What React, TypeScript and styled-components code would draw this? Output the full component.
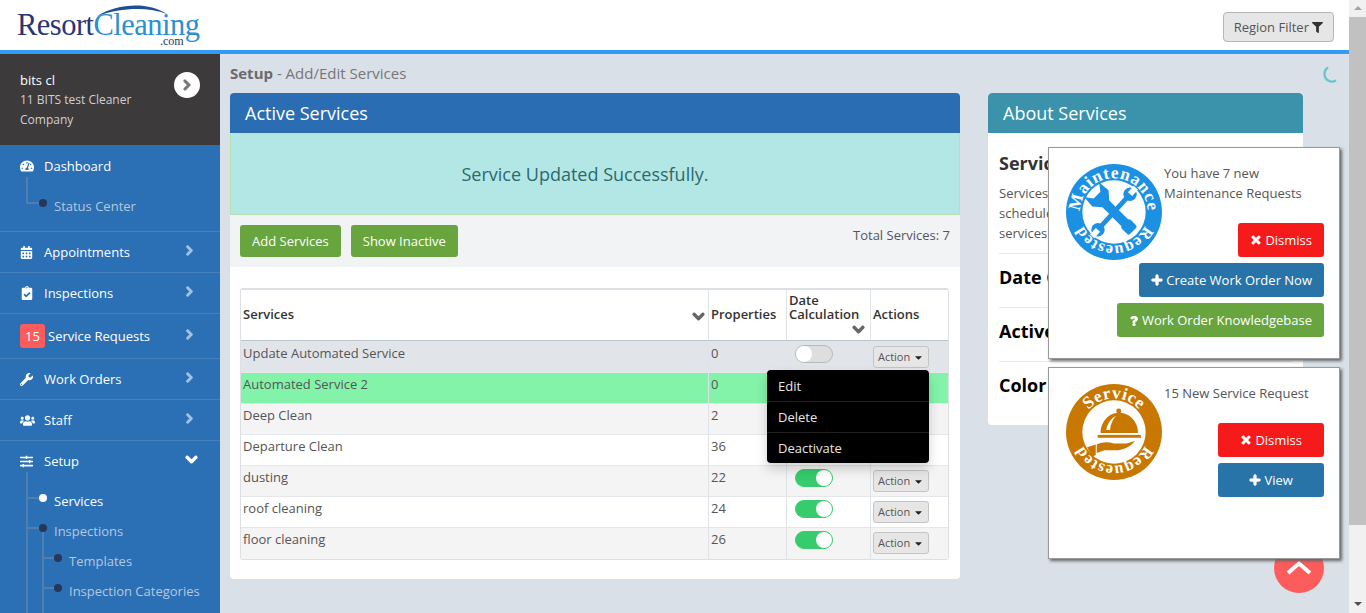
import React from "react";
import styled, { createGlobalStyle } from "styled-components";
import {
  FaCalendarAlt,
  FaCaretDown,
  FaChevronDown,
  FaChevronRight,
  FaClipboardCheck,
  FaFilter,
  FaPlus,
  FaQuestion,
  FaSlidersH,
  FaTachometerAlt,
  FaTimes,
  FaUsers,
  FaWrench,
} from "react-icons/fa";

const services = [
  { name: "Update Automated Service", count: 0, on: false, tone: "#e1e5ea" },
  { name: "Automated Service 2", count: 0, on: true, tone: "#84f3aa" },
  { name: "Deep Clean", count: 2, on: true, tone: "#f4f4f4" },
  { name: "Departure Clean", count: 36, on: true, tone: "#ffffff" },
  { name: "dusting", count: 22, on: true, tone: "#f4f4f4" },
  { name: "roof cleaning", count: 24, on: true, tone: "#ffffff" },
  { name: "floor cleaning", count: 26, on: true, tone: "#f4f4f4" },
];

const Logo = () => (
  <LogoSvg viewBox="0 0 190 50" width="190" height="50">
    <path d="M83 16 C103 4 133 1 153 14 C133 6 106 8 83 16Z" fill="#1f4f8f" />
    <text x="3" y="35" fontFamily="Liberation Serif, serif" fontSize="30.5" textLength="183" fill="#2b3576">
      Resort<tspan fill="#2b8fd2">Cleaning</tspan>
    </text>
    <text x="146" y="45" fontFamily="Liberation Serif, serif" fontSize="12" fill="#2b3576">
      .com
    </text>
  </LogoSvg>
);

const Spanner = ({ rotate, color }: { rotate: number; color: string }) => (
  <g transform={`rotate(${rotate} 50 50)`}>
    <rect x="47.5" y="28" width="5" height="44" fill={color} />
    <circle cx="50" cy="25" r="7" fill={color} />
    <circle cx="50" cy="75" r="7" fill={color} />
    <path d="M47 16h6v9h-6z" fill="#fff" />
    <path d="M47 84h6v-9h-6z" fill="#fff" />
  </g>
);

const MaintenanceBadge = () => (
  <BadgeSvg viewBox="0 0 100 100" width="96" height="96">
    <circle cx="50" cy="50" r="50" fill="#1c91e3" />
    <circle cx="50" cy="50" r="33" fill="#fff" />
    <defs>
      <path id="mTop" d="M17 61.5 A35 35 0 1 1 83 61.5" />
      <path id="mBot" d="M85 50 A35 35 0 0 1 15 50" />
    </defs>
    <Spanner rotate={42} color="#1c91e3" />
    <g transform="rotate(-45 50 50)">
      <rect x="45" y="30" width="10" height="40" fill="#1c91e3" />
      <path d="M39 17 L45 25 L55 25 L61 17 L62 30 L55 38 L45 38 L38 30Z" fill="#1c91e3" />
      <rect x="43.5" y="66" width="13" height="12" rx="2" fill="#1c91e3" />
    </g>
    <text fontFamily="Liberation Serif, serif" fontWeight="700" fontSize="18" fill="#fff" textAnchor="middle" letterSpacing=".8">
      <textPath href="#mTop" startOffset="50%">Maintenance</textPath>
    </text>
    <text fontFamily="Liberation Serif, serif" fontWeight="700" fontSize="17" fill="#fff" textAnchor="middle" letterSpacing=".6">
      <textPath href="#mBot" startOffset="50%">Requested</textPath>
    </text>
  </BadgeSvg>
);

const ServiceBadge = () => (
  <BadgeSvg viewBox="0 0 100 100" width="96" height="96">
    <circle cx="50" cy="50" r="50" fill="#c87800" />
    <circle cx="50" cy="50" r="33" fill="#fff" />
    <defs>
      <path id="sTop" d="M15 50 A35 35 0 0 1 85 50" />
      <path id="sBot" d="M85 50 A35 35 0 0 1 15 50" />
    </defs>
    <text fontFamily="Liberation Serif, serif" fontWeight="700" fontSize="18" fill="#fff" textAnchor="middle" letterSpacing=".6">
      <textPath href="#sTop" startOffset="50%">Service</textPath>
    </text>
    <text fontFamily="Liberation Serif, serif" fontWeight="700" fontSize="17" fill="#fff" textAnchor="middle" letterSpacing=".6">
      <textPath href="#sBot" startOffset="50%">Requested</textPath>
    </text>
    <circle cx="55" cy="28" r="2.6" fill="#c87800" />
    <path d="M36 51 C36 39 45 30 55 30 C66 30 75 39 75 51Z" fill="#c87800" />
    <path d="M42 48 C43 41 47 36 52 33 C48 38 46 43 46 48Z" fill="#fff" />
    <rect x="33" y="53" width="45" height="3" fill="#c87800" />
    <path d="M32 63 C38 60 44 60 50 62 L60 62 C64 62 66 61 72 59 C68 64 62 68 54 69 L40 69 L32 72Z" fill="#c87800" />
    <path d="M22 66 L31 63 L31 74 L27 76Z" fill="#c87800" />
  </BadgeSvg>
);

const App = () => {
  return (
    <Screen>
      <GlobalStyle />
      <Page>
        <Header>
          <Logo />
          <FilterButton>
            Region Filter <FaFilter size={11} />
          </FilterButton>
        </Header>
        <Body>
          <Sidebar>
            <UserBox>
              <UserText>
                <UserName>bits cl</UserName>
                <UserCompany>11 BITS test Cleaner Company</UserCompany>
              </UserText>
              <UserToggle>
                <FaChevronRight size={12} />
              </UserToggle>
            </UserBox>
            <NavGroup $height={87}>
              <NavHead>
                <NavIcon><FaTachometerAlt size={14} /></NavIcon>
                <NavLabel>Dashboard</NavLabel>
              </NavHead>
              <Tree $short>
                <TreeItem>Status Center</TreeItem>
              </Tree>
            </NavGroup>
            <NavRow>
              <NavIcon><FaCalendarAlt size={13} /></NavIcon>
              <NavLabel>Appointments</NavLabel>
              <NavArrow><FaChevronRight size={11} /></NavArrow>
            </NavRow>
            <NavRow>
              <NavIcon><FaClipboardCheck size={14} /></NavIcon>
              <NavLabel>Inspections</NavLabel>
              <NavArrow><FaChevronRight size={11} /></NavArrow>
            </NavRow>
            <NavRow $height={45}>
              <Count>15</Count>
              <NavLabel>Service Requests</NavLabel>
              <NavArrow><FaChevronRight size={11} /></NavArrow>
            </NavRow>
            <NavRow>
              <NavIcon><FaWrench size={13} /></NavIcon>
              <NavLabel>Work Orders</NavLabel>
              <NavArrow><FaChevronRight size={11} /></NavArrow>
            </NavRow>
            <NavRow>
              <NavIcon><FaUsers size={15} /></NavIcon>
              <NavLabel>Staff</NavLabel>
              <NavArrow><FaChevronRight size={11} /></NavArrow>
            </NavRow>
            <NavGroup $height={300}>
              <NavHead $height={40}>
                <NavIcon><FaSlidersH size={13} /></NavIcon>
                <NavLabel>Setup</NavLabel>
                <NavArrow $open><FaChevronDown size={13} /></NavArrow>
              </NavHead>
              <Tree>
                <TreeItem $active>Services</TreeItem>
                <TreeItem>Inspections</TreeItem>
                <SubTree>
                  <TreeItem>Templates</TreeItem>
                  <TreeItem>Inspection Categories</TreeItem>
                </SubTree>
              </Tree>
            </NavGroup>
          </Sidebar>
          <Main>
            <Crumb>
              <b>Setup</b> - Add/Edit Services
            </Crumb>
            <Columns>
              <ServicesPanel>
                <PanelHead $color="#2b6db3">Active Services</PanelHead>
                <Alert>Service Updated Successfully.</Alert>
                <Toolbar>
                  <GreenButton>Add Services</GreenButton>
                  <GreenButton>Show Inactive</GreenButton>
                  <Total>Total Services: 7</Total>
                </Toolbar>
                <TableWrap>
                  <Table>
                    <colgroup>
                      <col width="467" />
                      <col width="78" />
                      <col width="84" />
                      <col />
                    </colgroup>
                    <thead>
                      <tr>
                        <Th>
                          Services
                          <SideSort><FaChevronDown size={13} /></SideSort>
                        </Th>
                        <Th>Properties</Th>
                        <Th>
                          Date Calculation
                          <BlockSort><FaChevronDown size={13} /></BlockSort>
                        </Th>
                        <Th>Actions</Th>
                      </tr>
                    </thead>
                    <tbody>
                      {services.map((s, i) => (
                        <Row key={s.name} $tone={s.tone}>
                          <Td>{s.name}</Td>
                          <Td>{s.count}</Td>
                          <Td>
                            <Switch $on={s.on} />
                          </Td>
                          <ActionCell>
                            <ActionButton>
                              Action <FaCaretDown size={11} />
                            </ActionButton>
                            {i === 0 && (
                              <Menu>
                                <MenuItem>Edit</MenuItem>
                                <MenuItem>Delete</MenuItem>
                                <MenuItem>Deactivate</MenuItem>
                              </Menu>
                            )}
                          </ActionCell>
                        </Row>
                      ))}
                    </tbody>
                  </Table>
                </TableWrap>
              </ServicesPanel>
              <AboutPanel>
                <PanelHead $color="#3a93ab">About Services</PanelHead>
                <AboutBody>
                  <AboutIntro>
                    <AboutTitle $muted>Services</AboutTitle>
                    <AboutText>
                      Services
                      <br />
                      schedule
                      <br />
                      services
                    </AboutText>
                  </AboutIntro>
                  <AboutSection>
                    <AboutTitle>Date Calculation</AboutTitle>
                  </AboutSection>
                  <AboutSection>
                    <AboutTitle>Active</AboutTitle>
                  </AboutSection>
                  <AboutSection>
                    <AboutTitle>Color</AboutTitle>
                  </AboutSection>
                </AboutBody>
              </AboutPanel>
            </Columns>
          </Main>
        </Body>
      </Page>
      <Scrollbar>
        <ScrollArrow />
        <ScrollThumb />
        <ScrollArrow $down />
      </Scrollbar>
      <Spinner viewBox="0 0 18 18" width="18" height="18">
        <path d="M6 1.6 A7 7 0 1 0 14 14.5" fill="none" stroke="#68c5cf" strokeWidth="2.4" />
      </Spinner>
      <TopButton>
        <svg viewBox="0 0 26 14" width="26" height="14">
          <path d="M2 12 L13 2.5 L24 12" fill="none" stroke="#fff" strokeWidth="4" />
        </svg>
      </TopButton>
      <Popup $top={148} $height={210}>
        <MaintenanceBadge />
        <PopupContent>
          <PopupText>
            You have 7 new
            <br />
            Maintenance Requests
          </PopupText>
          <PopupButton $color="#f71a1a">
            <FaTimes size={12} /> Dismiss
          </PopupButton>
          <PopupButton $color="#2874a8">
            <FaPlus size={12} /> Create Work Order Now
          </PopupButton>
          <PopupButton $color="#68a53f">
            <FaQuestion size={10} /> Work Order Knowledgebase
          </PopupButton>
        </PopupContent>
      </Popup>
      <Popup $top={368} $height={190}>
        <ServiceBadge />
        <PopupContent>
          <PopupText>15 New Service Request</PopupText>
          <PopupButton $color="#f71a1a" $wide>
            <FaTimes size={12} /> Dismiss
          </PopupButton>
          <PopupButton $color="#2874a8" $wide>
            <FaPlus size={12} /> View
          </PopupButton>
        </PopupContent>
      </Popup>
    </Screen>
  );
};

export default App;

const GlobalStyle = createGlobalStyle`
  html, body {
    margin: 0;
    padding: 0;
    height: 613px;
    overflow: hidden;
  }
  * {
    box-sizing: border-box;
  }
`;
const Screen = styled.div`
  position: relative;
  width: 1366px;
  height: 613px;
  display: flex;
  overflow: hidden;
  background-color: #d9e0e8;
  font-family: "Open Sans", "Liberation Sans", sans-serif;
  font-size: 13px;
  color: #555;
`;
const Page = styled.div`
  flex: 1;
  min-width: 0;
  display: flex;
  flex-direction: column;
`;
const Header = styled.header`
  height: 54px;
  flex-shrink: 0;
  display: flex;
  align-items: flex-start;
  justify-content: space-between;
  padding: 0 15px 0 14px;
  background-color: #fff;
  border-bottom: 4px solid #339af5;
`;
const LogoSvg = styled.svg`
  display: block;
`;
const BadgeSvg = styled.svg`
  display: block;
  flex-shrink: 0;
  margin-top: 1px;
`;
const FilterButton = styled.button`
  margin-top: 12px;
  width: 111px;
  height: 30px;
  padding: 0;
  background-color: #e6e6e6;
  border: 1px solid #b5b5b5;
  border-radius: 4px;
  font-family: inherit;
  font-size: 13px;
  color: #555;
  svg {
    color: #333;
    vertical-align: -1px;
  }
`;
const Body = styled.div`
  flex: 1;
  min-height: 0;
  display: flex;
`;
const Sidebar = styled.nav`
  width: 220px;
  flex-shrink: 0;
  overflow: hidden;
  background-color: #2b6fb5;
`;
const UserBox = styled.div`
  height: 91px;
  display: flex;
  justify-content: space-between;
  padding: 16px 20px;
  background-color: #3c3a3b;
`;
const UserText = styled.div`
  width: 130px;
`;
const UserName = styled.div`
  color: #fff;
  line-height: 20px;
`;
const UserCompany = styled.div`
  font-size: 12px;
  line-height: 19.5px;
  color: #d0d0d0;
`;
const UserToggle = styled.div`
  width: 26px;
  height: 26px;
  margin-top: 2px;
  border-radius: 50%;
  display: flex;
  align-items: center;
  justify-content: center;
  background-color: #fff;
  color: #777;
  svg {
    stroke: currentColor;
    stroke-width: 50;
  }
`;
const NavGroup = styled.div<{ $height: number }>`
  height: ${(p) => p.$height}px;
  border-bottom: 1px solid #4a80ba;
`;
const NavHead = styled.div<{ $height?: number }>`
  height: ${(p) => p.$height ?? 41}px;
  display: flex;
  align-items: center;
  padding: 0 20px;
  color: #fff;
`;
const NavRow = styled(NavHead)`
  border-bottom: 1px solid #4a80ba;
`;
const NavIcon = styled.span`
  width: 24px;
  display: flex;
  align-items: center;
`;
const NavLabel = styled.span`
  flex: 1;
  font-weight: 500;
`;
const NavArrow = styled.span<{ $open?: boolean }>`
  display: flex;
  margin-right: ${(p) => (p.$open ? "2px" : "5px")};
  margin-top: -3px;
  color: ${(p) => (p.$open ? "#fff" : "#a5c3e2")};
  svg {
    stroke: currentColor;
    stroke-width: 50;
  }
`;
const Count = styled.span`
  width: 25px;
  height: 24px;
  margin-right: 3px;
  border-radius: 3px;
  display: flex;
  align-items: center;
  justify-content: center;
  background-color: #fd5c5c;
  color: #fff;
  font-size: 13px;
`;
const Tree = styled.div<{ $short?: boolean }>`
  position: relative;
  margin-top: 5px;
  padding-left: 27px;
  &::before {
    content: "";
    position: absolute;
    left: 26px;
    top: -14px;
    width: 2px;
    height: ${(p) => (p.$short ? "27px" : "400px")};
    background-color: #4f7fae;
  }
`;
const SubTree = styled.div`
  position: relative;
  padding-left: 15px;
  &::before {
    content: "";
    position: absolute;
    left: 15px;
    top: -14px;
    width: 2px;
    height: 300px;
    background-color: #4f7fae;
  }
`;
const TreeItem = styled.div<{ $active?: boolean }>`
  position: relative;
  height: 30px;
  line-height: 30px;
  padding-left: 27px;
  color: ${(p) => (p.$active ? "#fff" : "#b4c8de")};
  font-weight: ${(p) => (p.$active ? 500 : 400)};
  &::before {
    content: "";
    position: absolute;
    left: 0;
    top: 11px;
    width: 12px;
    height: 2px;
    background-color: #4f7fae;
  }
  &::after {
    content: "";
    position: absolute;
    left: 12px;
    top: 8px;
    width: 8px;
    height: 8px;
    border-radius: 50%;
    background-color: ${(p) => (p.$active ? "#fff" : "#26375a")};
  }
`;
const Main = styled.main`
  flex: 1;
  min-width: 0;
  padding: 0 0 0 10px;
`;
const Crumb = styled.div`
  height: 39px;
  line-height: 38px;
  font-size: 15px;
  color: #777;
  b {
    color: #6a6a6a;
  }
`;
const Columns = styled.div`
  display: flex;
  align-items: flex-start;
  gap: 28px;
`;
const ServicesPanel = styled.section`
  width: 730px;
  height: 486px;
  flex-shrink: 0;
  background-color: #fff;
  border-radius: 4px;
`;
const AboutPanel = styled.section`
  width: 315px;
  height: 332px;
  flex-shrink: 0;
  background-color: #fff;
  border-radius: 4px;
  overflow: hidden;
`;
const PanelHead = styled.h2<{ $color: string }>`
  margin: 0;
  height: 40px;
  padding: 0 15px;
  line-height: 41px;
  font-size: 18px;
  font-weight: 400;
  color: #fff;
  border-radius: 4px 4px 0 0;
  background-color: ${(p) => p.$color};
`;
const Alert = styled.div`
  height: 82px;
  display: flex;
  align-items: center;
  justify-content: center;
  padding-right: 20px;
  background-color: #b2e7e6;
  border: 1px solid #b8e2b4;
  border-top: none;
  font-size: 18px;
  color: #2d6a6a;
`;
const Toolbar = styled.div`
  height: 52px;
  display: flex;
  gap: 10px;
  padding: 10px;
  background-color: #f2f3f5;
`;
const GreenButton = styled.button`
  height: 32px;
  padding: 0 12px;
  border: none;
  border-radius: 3px;
  background-color: #68a53f;
  color: #fff;
  font-family: inherit;
  font-size: 13px;
  font-weight: 500;
`;
const Total = styled.div`
  margin-left: auto;
  line-height: 20px;
`;
const TableWrap = styled.div`
  padding: 21px 11px 0 10px;
`;
const Table = styled.table`
  width: 709px;
  border-collapse: separate;
  border-spacing: 0;
  table-layout: fixed;
  border: 1px solid #dcdfe3;
  border-top-width: 2px;
  border-radius: 3px;
`;
const Th = styled.th`
  position: relative;
  height: 51px;
  padding: 0 2px 2px;
  text-align: left;
  vertical-align: middle;
  font-size: 13px;
  font-weight: 600;
  line-height: 14px;
  color: #333;
  background-color: #fff;
  border-bottom: 1px solid #b8c4ce;
  & + & {
    border-left: 1px solid #dfe3e8;
  }
`;
const SideSort = styled.span`
  position: absolute;
  right: 3px;
  top: 20px;
  display: flex;
  color: #666;
  svg {
    stroke: currentColor;
    stroke-width: 50;
  }
`;
const BlockSort = styled.span`
  height: 15px;
  display: flex;
  align-items: flex-end;
  justify-content: flex-end;
  padding-right: 3px;
  color: #666;
  svg {
    stroke: currentColor;
    stroke-width: 50;
  }
`;
const Row = styled.tr<{ $tone: string }>`
  height: 31px;
  background-color: ${(p) => p.$tone};
`;
const Td = styled.td`
  position: relative;
  height: 31px;
  padding: 1px 2px 0;
  vertical-align: top;
  line-height: 20px;
  border-bottom: 1px solid #e4e7eb;
  tr:first-child & {
    height: 32px;
    padding-top: 2px;
  }
  tr:last-child & {
    border-bottom: none;
  }
  & + & {
    border-left: 1px solid #dfe3e8;
  }
`;
const ActionCell = styled(Td)`
  padding: 4px 2px 0;
  tr:first-child & {
    padding-top: 5px;
  }
`;
const Switch = styled.span<{ $on: boolean }>`
  position: relative;
  display: block;
  width: 38px;
  height: 18px;
  margin: 2px 0 0 6px;
  border-radius: 9px;
  border: 1px solid ${(p) => (p.$on ? "#3acb6e" : "#b8b8b8")};
  background-color: ${(p) => (p.$on ? "#36cb6c" : "#dedede")};
  &::after {
    content: "";
    position: absolute;
    top: 0;
    left: ${(p) => (p.$on ? "20px" : "0")};
    width: 16px;
    height: 16px;
    border-radius: 50%;
    background-color: #fff;
  }
`;
const ActionButton = styled.button`
  display: block;
  width: 56px;
  height: 22px;
  padding: 0;
  border: 1px solid #c4c4c4;
  border-radius: 3px;
  background-color: #e6e6e6;
  color: #555;
  font-family: inherit;
  font-size: 11px;
  line-height: 18px;
  svg {
    color: #222;
    vertical-align: -2px;
  }
`;
const Menu = styled.ul`
  position: absolute;
  top: 29px;
  right: 19px;
  z-index: 3;
  width: 162px;
  margin: 0;
  padding: 0;
  list-style: none;
  border-radius: 4px;
  background-color: #000;
  box-shadow: 0 6px 12px rgba(0, 0, 0, 0.175);
`;
const MenuItem = styled.li`
  height: 31px;
  padding-left: 11px;
  line-height: 31px;
  color: #e6e6e6;
  &:first-child {
    line-height: 32px;
  }
  & + & {
    border-top: 1px solid #222;
  }
`;
const AboutBody = styled.div`
  padding: 0 11px;
`;
const AboutIntro = styled.div`
  padding: 18px 0 10px;
`;
const AboutSection = styled.div`
  padding: 11px 0 17px;
  border-top: 1px solid #e8e8e8;
`;
const AboutTitle = styled.h3<{ $muted?: boolean }>`
  margin: 0;
  line-height: 25px;
  font-size: 18px;
  font-weight: 700;
  white-space: nowrap;
  color: ${(p) => (p.$muted ? "#333" : "#000")};
`;
const AboutText = styled.p`
  margin: 7px 0 0;
  line-height: 20px;
  color: #555;
`;
const Scrollbar = styled.div`
  width: 17px;
  flex-shrink: 0;
  display: flex;
  flex-direction: column;
  background-color: #f1f1f1;
`;
const ScrollArrow = styled.div<{ $down?: boolean }>`
  height: 17px;
  flex-shrink: 0;
  position: relative;
  margin-top: ${(p) => (p.$down ? "auto" : "0")};
  &::after {
    content: "";
    position: absolute;
    left: 5px;
    top: 6px;
    border-left: 4px solid transparent;
    border-right: 4px solid transparent;
    ${(p) => (p.$down ? "border-top: 4px solid #505050;" : "border-bottom: 4px solid #a3a3a3;")}
  }
`;
const ScrollThumb = styled.div`
  height: 508px;
  background-color: #c1c1c1;
`;
const Spinner = styled.svg`
  position: absolute;
  top: 66px;
  left: 1322px;
`;
const TopButton = styled.div`
  position: absolute;
  top: 543px;
  left: 1274px;
  width: 50px;
  height: 50px;
  border-radius: 50%;
  display: flex;
  align-items: center;
  justify-content: center;
  background-color: #fd5c5c;
`;
const Popup = styled.div<{ $top: number; $height: number }>`
  position: absolute;
  left: 1049px;
  top: ${(p) => p.$top}px;
  width: 290px;
  height: ${(p) => p.$height}px;
  display: flex;
  align-items: flex-start;
  gap: 2px;
  padding: 15px 15px 0 17px;
  background-color: #fff;
  box-shadow: 0 0 0 1px #999, 2px 2px 3px 1px #666;
  z-index: 5;
`;
const PopupContent = styled.div`
  flex: 1;
  min-width: 0;
  display: flex;
  flex-direction: column;
  align-items: flex-end;
  gap: 6px;
`;
const PopupText = styled.div`
  align-self: flex-start;
  margin-bottom: 14px;
  line-height: 20px;
  color: #555;
`;
const PopupButton = styled.button<{ $color: string; $wide?: boolean }>`
  flex-shrink: 0;
  height: 34px;
  padding: 0 12px;
  width: ${(p) => (p.$wide ? "106px" : "auto")};
  border: none;
  border-radius: 3px;
  background-color: ${(p) => p.$color};
  color: #fff;
  font-family: inherit;
  font-size: 13px;
  white-space: nowrap;
  svg {
    vertical-align: -1px;
    stroke: currentColor;
    stroke-width: 40;
  }
`;
